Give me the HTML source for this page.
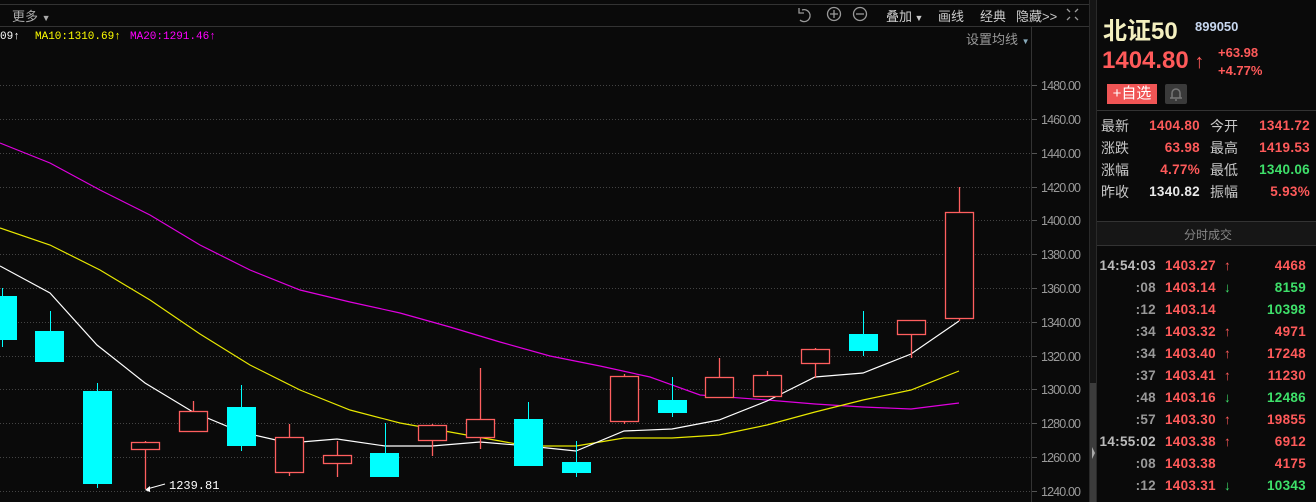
<!DOCTYPE html>
<html><head><meta charset="utf-8"><style>
*{margin:0;padding:0;box-sizing:border-box}
body{width:1316px;height:502px;background:#0a0a0a;overflow:hidden;position:relative;font-family:"Liberation Sans","Noto Sans CJK SC",sans-serif;color:#c8c8c8}
.a{position:absolute;white-space:nowrap}
.m{font-family:"Liberation Mono","Noto Sans CJK SC",monospace}
.r{color:#ff5a5a}.g{color:#3ee06a}
.row{position:absolute;left:1097px;width:219px;height:22px;font-size:14px;line-height:22px}
.row span{top:0}
.v{font-weight:bold;font-size:13.5px;letter-spacing:0.3px}
</style></head><body>
<svg class="a" style="left:0;top:0" width="1316" height="502">
<line x1="0" y1="4.5" x2="1089" y2="4.5" stroke="#333"/>
<line x1="0" y1="26.5" x2="1089" y2="26.5" stroke="#333"/>
<line x1="1089.5" y1="0" x2="1089.5" y2="502" stroke="#2a2a2a"/>
<rect x="1090" y="0" width="6" height="383" fill="#151515"/>
<rect x="1090" y="383" width="6" height="119" fill="#3c3c3c"/>
<path d="M1092 447 L1095 453 L1092 459Z" fill="#aaa"/>
<line x1="1096.5" y1="0" x2="1096.5" y2="502" stroke="#2a2a2a"/>
<line x1="1031.5" y1="27" x2="1031.5" y2="502" stroke="#333"/>
<g stroke="#444" stroke-dasharray="1,2">
<line x1="0" y1="85.5" x2="1031" y2="85.5"/><line x1="0" y1="119.5" x2="1031" y2="119.5"/><line x1="0" y1="153.5" x2="1031" y2="153.5"/><line x1="0" y1="187.5" x2="1031" y2="187.5"/><line x1="0" y1="220.5" x2="1031" y2="220.5"/><line x1="0" y1="254.5" x2="1031" y2="254.5"/><line x1="0" y1="288.5" x2="1031" y2="288.5"/><line x1="0" y1="322.5" x2="1031" y2="322.5"/><line x1="0" y1="356.5" x2="1031" y2="356.5"/><line x1="0" y1="389.5" x2="1031" y2="389.5"/><line x1="0" y1="423.5" x2="1031" y2="423.5"/><line x1="0" y1="457.5" x2="1031" y2="457.5"/><line x1="0" y1="491.5" x2="1031" y2="491.5"/>
</g>
<g fill="#9a9a9a" font-family="Liberation Sans,sans-serif" font-size="12.5">
<text x="1041" y="90" textLength="40">1480.00</text><text x="1041" y="124" textLength="40">1460.00</text><text x="1041" y="158" textLength="40">1440.00</text><text x="1041" y="192" textLength="40">1420.00</text><text x="1041" y="225" textLength="40">1400.00</text><text x="1041" y="259" textLength="40">1380.00</text><text x="1041" y="293" textLength="40">1360.00</text><text x="1041" y="327" textLength="40">1340.00</text><text x="1041" y="361" textLength="40">1320.00</text><text x="1041" y="394" textLength="40">1300.00</text><text x="1041" y="428" textLength="40">1280.00</text><text x="1041" y="462" textLength="40">1260.00</text><text x="1041" y="496" textLength="40">1240.00</text>
</g>
<g stroke="#555">
<path d="M1032 85.5h5M1032 119.5h5M1032 153.5h5M1032 187.5h5M1032 220.5h5M1032 254.5h5M1032 288.5h5M1032 322.5h5M1032 356.5h5M1032 389.5h5M1032 423.5h5M1032 457.5h5M1032 491.5h5"/>
</g>
<polyline fill="none" stroke="#e000e0" stroke-width="1.2" points="0,143 50,163 100,190 150,215 200,245 250,270 300,290 350,302 400,313 450,327 500,342 550,356 600,366 650,377 700,395 767,400 815,404 863,407 911,409 959,403"/>
<polyline fill="none" stroke="#e8e800" stroke-width="1.2" points="0,228 50,245 100,270 150,300 200,334 250,365 300,390 350,410 400,423 450,432 500,441 528,446 576,446 624,438 672,438 719,435 767,425 815,412 863,400 911,390 959,371"/>
<polyline fill="none" stroke="#ffffff" stroke-width="1.2" points="0,266 50,293 97,345 145,383 193,412 241,432 289,443 337,439 385,446 432,446 480,442 528,446 576,451 624,431 672,429 719,420 767,401 815,377 863,373 911,354 959,321"/>
<g stroke="#00ffff" fill="#00ffff">
<line x1="2.5" y1="288" x2="2.5" y2="347"/><rect x="0" y="296" width="17" height="44" stroke="none"/>
<line x1="50.5" y1="311" x2="50.5" y2="362"/><rect x="35" y="331" width="29" height="31" stroke="none"/>
<line x1="97.5" y1="383" x2="97.5" y2="488"/><rect x="83" y="391" width="29" height="93" stroke="none"/>
<line x1="241.5" y1="385" x2="241.5" y2="451"/><rect x="227" y="407" width="29" height="39" stroke="none"/>
<line x1="385.5" y1="423" x2="385.5" y2="477"/><rect x="370" y="453" width="29" height="24" stroke="none"/>
<line x1="528.5" y1="402" x2="528.5" y2="466"/><rect x="514" y="419" width="29" height="47" stroke="none"/>
<line x1="576.5" y1="441" x2="576.5" y2="477"/><rect x="562" y="462" width="29" height="11" stroke="none"/>
<line x1="672.5" y1="377" x2="672.5" y2="417"/><rect x="658" y="400" width="29" height="13" stroke="none"/>
<line x1="863.5" y1="311" x2="863.5" y2="356"/><rect x="849" y="334" width="29" height="17" stroke="none"/>
</g>
<g stroke="#ff5f5f" fill="#0a0a0a" stroke-width="1.3">
<line x1="145.5" y1="441" x2="145.5" y2="489"/><rect x="131.5" y="442.5" width="28" height="7"/>
<line x1="193.5" y1="401" x2="193.5" y2="431"/><rect x="179.5" y="411.5" width="28" height="20"/>
<line x1="289.5" y1="424" x2="289.5" y2="476"/><rect x="275.5" y="437.5" width="28" height="35"/>
<line x1="337.5" y1="441" x2="337.5" y2="477"/><rect x="323.5" y="455.5" width="28" height="8"/>
<line x1="432.5" y1="424" x2="432.5" y2="456"/><rect x="418.5" y="425.5" width="28" height="15"/>
<line x1="480.5" y1="368" x2="480.5" y2="449"/><rect x="466.5" y="419.5" width="28" height="18"/>
<line x1="624.5" y1="374" x2="624.5" y2="424"/><rect x="610.5" y="376.5" width="28" height="45"/>
<line x1="719.5" y1="358" x2="719.5" y2="398"/><rect x="705.5" y="377.5" width="28" height="20"/>
<line x1="767.5" y1="371" x2="767.5" y2="396"/><rect x="753.5" y="375.5" width="28" height="21"/>
<line x1="815.5" y1="348" x2="815.5" y2="378"/><rect x="801.5" y="349.5" width="28" height="14"/>
<line x1="911.5" y1="320" x2="911.5" y2="358"/><rect x="897.5" y="320.5" width="28" height="14"/>
<line x1="959.5" y1="187" x2="959.5" y2="321"/><rect x="945.5" y="212.5" width="28" height="106"/>
</g>
<path d="M147 489 L165 484" stroke="#fff"/><path d="M145 490 l5 -4 l0 6z" fill="#fff"/>
<text x="169" y="489" fill="#fff" font-family="Liberation Mono,monospace" font-size="12">1239.81</text>
<g stroke="#999" fill="none" stroke-width="1.3">
<path d="M802 10 a6 6 0 1 1 -2 10 M799 8 v5 h5"/>
<circle cx="834" cy="14" r="6.5"/><path d="M830 14h8M834 10v8"/>
<circle cx="860" cy="14" r="6.5"/><path d="M856 14h8"/>
<path d="M1067 9l3 3M1078 9l-3 3M1067 20l3-3M1078 20l-3-3"/>
</g>
<rect x="1165" y="84" width="22" height="20" rx="2" fill="#3a3a3a"/>
<path d="M1170 98h12M1172 98v-5a4 4 0 0 1 8 0v5M1175 100h2" stroke="#777" fill="none" stroke-width="1.5"/>
<line x1="1097" y1="110.5" x2="1316" y2="110.5" stroke="#333"/>
<line x1="1097" y1="221.5" x2="1316" y2="221.5" stroke="#333"/>
<rect x="1097" y="222" width="219" height="23" fill="#161616"/>
<line x1="1097" y1="245.5" x2="1316" y2="245.5" stroke="#333"/>
</svg>
<div class="a" style="left:12px;top:6px;font-size:13px;color:#aaa">更多 <span style="font-size:9px">▼</span></div>
<div class="a" style="left:886px;top:6px;font-size:13px;color:#ccc">叠加<span style="font-size:9px"> ▼</span></div>
<div class="a" style="left:938px;top:6px;font-size:13px;color:#ccc">画线</div>
<div class="a" style="left:980px;top:6px;font-size:13px;color:#ccc">经典</div>
<div class="a" style="left:1016px;top:6px;font-size:13px;color:#ccc">隐藏&gt;&gt;</div>
<div class="a m" style="left:0;top:31px;font-size:11px;color:#fff">09↑</div>
<div class="a m" style="left:35px;top:31px;font-size:11px;color:#ffff00">MA10:1310.69↑</div>
<div class="a m" style="left:130px;top:31px;font-size:11px;color:#ff00ff">MA20:1291.46↑</div>
<div class="a" style="left:966px;top:29px;font-size:13px;color:#999">设置均线 <span style="font-size:8px;color:#8ab">▼</span></div>
<div class="a" style="left:1103px;top:11px;font-size:24px;font-weight:bold;color:#f4f0c0">北证50</div>
<div class="a" style="left:1195px;top:19px;font-size:13px;font-weight:bold;color:#c8d8f0">899050</div>
<div class="a r" style="left:1102px;top:47px;font-size:24px;font-weight:bold">1404.80<span style="font-size:20px"> ↑</span></div>
<div class="a r" style="left:1218px;top:45px;font-size:13px;font-weight:bold">+63.98</div>
<div class="a r" style="left:1218px;top:63px;font-size:13px;font-weight:bold">+4.77%</div>
<div class="a" style="left:1107px;top:84px;width:50px;height:20px;background:#f05555;color:#fff;font-size:15px;line-height:20px;text-align:center">+自选</div>
<div class="row" style="top:115px"><span class="a" style="left:4px">最新</span><span class="a r v" style="right:116px">1404.80</span><span class="a" style="left:113px">今开</span><span class="a r v" style="right:6px">1341.72</span></div>
<div class="row" style="top:137px"><span class="a" style="left:4px">涨跌</span><span class="a r v" style="right:116px">63.98</span><span class="a" style="left:113px">最高</span><span class="a r v" style="right:6px">1419.53</span></div>
<div class="row" style="top:159px"><span class="a" style="left:4px">涨幅</span><span class="a r v" style="right:116px">4.77%</span><span class="a" style="left:113px">最低</span><span class="a g v" style="right:6px">1340.06</span></div>
<div class="row" style="top:181px"><span class="a" style="left:4px">昨收</span><span class="a v" style="right:116px;color:#e8e8e8">1340.82</span><span class="a" style="left:113px">振幅</span><span class="a r v" style="right:6px">5.93%</span></div>
<div class="a" style="left:1184px;top:226px;font-size:12px;color:#888">分时成交</div>
<div>
<div class="row" style="top:255px"><span class="a v" style="right:160px;color:#bbb">14:54:03</span><span class="a r v" style="left:68px">1403.27</span><span class="a r v" style="left:127px">↑</span><span class="a r v" style="right:10px">4468</span></div>
<div class="row" style="top:277px"><span class="a v" style="right:160px;color:#999">:08</span><span class="a r v" style="left:68px">1403.14</span><span class="a g v" style="left:127px">↓</span><span class="a g v" style="right:10px">8159</span></div>
<div class="row" style="top:299px"><span class="a v" style="right:160px;color:#999">:12</span><span class="a r v" style="left:68px">1403.14</span><span class="a g v" style="right:10px">10398</span></div>
<div class="row" style="top:321px"><span class="a v" style="right:160px;color:#999">:34</span><span class="a r v" style="left:68px">1403.32</span><span class="a r v" style="left:127px">↑</span><span class="a r v" style="right:10px">4971</span></div>
<div class="row" style="top:343px"><span class="a v" style="right:160px;color:#999">:34</span><span class="a r v" style="left:68px">1403.40</span><span class="a r v" style="left:127px">↑</span><span class="a r v" style="right:10px">17248</span></div>
<div class="row" style="top:365px"><span class="a v" style="right:160px;color:#999">:37</span><span class="a r v" style="left:68px">1403.41</span><span class="a r v" style="left:127px">↑</span><span class="a r v" style="right:10px">11230</span></div>
<div class="row" style="top:387px"><span class="a v" style="right:160px;color:#999">:48</span><span class="a r v" style="left:68px">1403.16</span><span class="a g v" style="left:127px">↓</span><span class="a g v" style="right:10px">12486</span></div>
<div class="row" style="top:409px"><span class="a v" style="right:160px;color:#999">:57</span><span class="a r v" style="left:68px">1403.30</span><span class="a r v" style="left:127px">↑</span><span class="a r v" style="right:10px">19855</span></div>
<div class="row" style="top:431px"><span class="a v" style="right:160px;color:#bbb">14:55:02</span><span class="a r v" style="left:68px">1403.38</span><span class="a r v" style="left:127px">↑</span><span class="a r v" style="right:10px">6912</span></div>
<div class="row" style="top:453px"><span class="a v" style="right:160px;color:#999">:08</span><span class="a r v" style="left:68px">1403.38</span><span class="a r v" style="right:10px">4175</span></div>
<div class="row" style="top:475px"><span class="a v" style="right:160px;color:#999">:12</span><span class="a r v" style="left:68px">1403.31</span><span class="a g v" style="left:127px">↓</span><span class="a g v" style="right:10px">10343</span></div>
</div>
</body></html>
